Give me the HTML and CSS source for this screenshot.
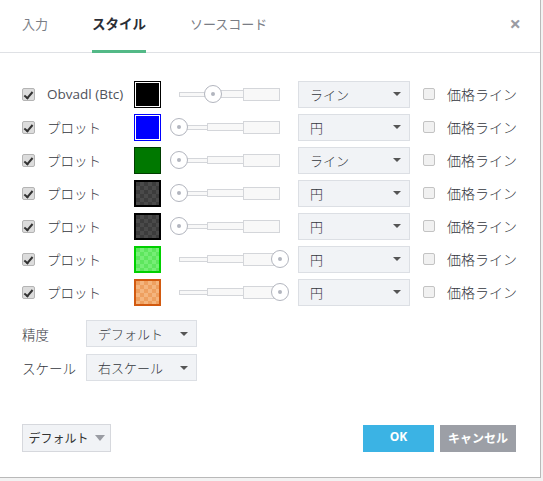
FILE: index.html
```html
<!DOCTYPE html>
<html lang="ja">
  <head>
    <meta charset="UTF-8" />
    <title>スタイル</title>
    <link rel="stylesheet" href="styles.css">
  </head>
  <body>
    <div class="dialog">
      <div class="dialog-header">
        <span class="tab">入力</span>
        <span class="tab tab-active">スタイル</span>
        <span class="tab">ソースコード</span>
        <span class="close">&times;</span>
      </div>

      <div class="dialog-body">
        <div class="plots">
          <div class="row">
            <span class="check checked"></span>
            <span class="label latin">Obvadl (Btc)</span>
            <span class="swatch black"><i></i></span>
            <div class="slider">
              <div class="track"><b class="s1"></b><b class="s2"></b><b class="s3"></b></div>
              <span class="handle" style="left: 43px"></span>
            </div>
            <div class="select"><span>ライン</span><i class="caret"></i></div>
            <span class="check"></span>
            <span class="price">価格ライン</span>
          </div>
          <div class="row">
            <span class="check checked"></span>
            <span class="label">プロット</span>
            <span class="swatch blue"><i></i></span>
            <div class="slider">
              <div class="track"><b class="s1"></b><b class="s2"></b><b class="s3"></b></div>
              <span class="handle" style="left: 9px"></span>
            </div>
            <div class="select"><span>円</span><i class="caret"></i></div>
            <span class="check"></span>
            <span class="price">価格ライン</span>
          </div>
          <div class="row">
            <span class="check checked"></span>
            <span class="label">プロット</span>
            <span class="swatch green"><i></i></span>
            <div class="slider">
              <div class="track"><b class="s1"></b><b class="s2"></b><b class="s3"></b></div>
              <span class="handle" style="left: 9px"></span>
            </div>
            <div class="select"><span>ライン</span><i class="caret"></i></div>
            <span class="check"></span>
            <span class="price">価格ライン</span>
          </div>
          <div class="row">
            <span class="check checked"></span>
            <span class="label">プロット</span>
            <span class="swatch checker dark"><i></i></span>
            <div class="slider">
              <div class="track"><b class="s1"></b><b class="s2"></b><b class="s3"></b></div>
              <span class="handle" style="left: 9px"></span>
            </div>
            <div class="select"><span>円</span><i class="caret"></i></div>
            <span class="check"></span>
            <span class="price">価格ライン</span>
          </div>
          <div class="row">
            <span class="check checked"></span>
            <span class="label">プロット</span>
            <span class="swatch checker dark"><i></i></span>
            <div class="slider">
              <div class="track"><b class="s1"></b><b class="s2"></b><b class="s3"></b></div>
              <span class="handle" style="left: 9px"></span>
            </div>
            <div class="select"><span>円</span><i class="caret"></i></div>
            <span class="check"></span>
            <span class="price">価格ライン</span>
          </div>
          <div class="row">
            <span class="check checked"></span>
            <span class="label">プロット</span>
            <span class="swatch checker lime"><i></i></span>
            <div class="slider">
              <div class="track"><b class="s1"></b><b class="s2"></b><b class="s3"></b></div>
              <span class="handle" style="left: 110px"></span>
            </div>
            <div class="select"><span>円</span><i class="caret"></i></div>
            <span class="check"></span>
            <span class="price">価格ライン</span>
          </div>
          <div class="row">
            <span class="check checked"></span>
            <span class="label">プロット</span>
            <span class="swatch checker orange"><i></i></span>
            <div class="slider">
              <div class="track"><b class="s1"></b><b class="s2"></b><b class="s3"></b></div>
              <span class="handle" style="left: 110px"></span>
            </div>
            <div class="select"><span>円</span><i class="caret"></i></div>
            <span class="check"></span>
            <span class="price">価格ライン</span>
          </div>
        </div>

        <div class="options">
          <div class="option">
            <span class="option-label">精度</span>
            <div class="select small"><span>デフォルト</span><i class="caret"></i></div>
          </div>
          <div class="option">
            <span class="option-label">スケール</span>
            <div class="select small"><span>右スケール</span><i class="caret"></i></div>
          </div>
        </div>
      </div>

      <div class="dialog-footer">
        <div class="btn-default">デフォルト <i class="caret big"></i></div>
        <div class="actions">
          <span class="btn ok">OK</span>
          <span class="btn cancel">キャンセル</span>
        </div>
      </div>
    </div>
  </body>
</html>
```

FILE: styles.css
```css
* {
  margin: 0;
  padding: 0;
  box-sizing: border-box;
}

body {
  font-family: "Open Sans", "Noto Sans CJK JP", sans-serif;
  font-size: 13px;
  font-weight: 300;
  color: #33363d;
  background-color: #f2f2f2;
  height: 481px;
  overflow: hidden;
}

.dialog {
  width: 541px;
  height: 478px;
  background-color: #fff;
  border-right: 1px solid #b9b9b9;
  border-bottom: 1px solid #b9b9b9;
  display: flex;
  flex-direction: column;
}

/* header */

.dialog-header {
  height: 53px;
  display: flex;
  align-items: stretch;
  padding-left: 22px;
  border-bottom: 1px solid #dfe1e5;
}

.tab {
  display: flex;
  align-items: center;
  padding-bottom: 4px;
  margin-right: 44px;
  font-size: 13px;
  font-weight: 400;
  color: #7a7d85;
  border-bottom: 3px solid transparent;
  margin-bottom: -1px;
}

.tab-active {
  color: #2b2e36;
  font-weight: bold;
  font-size: 13.5px;
  border-bottom-color: #53b987;
}

.close {
  margin-left: auto;
  margin-right: 19px;
  display: flex;
  align-items: center;
  padding-bottom: 5px;
  font-size: 20px;
  font-weight: bold;
  color: #9a9ca3;
}

/* body */

.dialog-body {
  flex: 1;
  padding: 28px 0 0 22px;
}

.plots {
  display: flex;
  flex-direction: column;
  gap: 7px;
}

.row {
  display: flex;
  align-items: center;
  height: 26px;
}

.check {
  width: 12px;
  height: 12px;
  border: 1px solid #c3c3c3;
  border-radius: 2px;
  background-color: #f1f1f1;
  flex-shrink: 0;
  position: relative;
}

.check.checked {
  width: 13px;
  height: 13px;
  background-color: #dcdcdc;
  border-color: #b4b4b4;
}

.check.checked::after {
  content: "";
  position: absolute;
  left: 3px;
  top: 1px;
  width: 3px;
  height: 7px;
  border-right: 2px solid #333;
  border-bottom: 2px solid #333;
  transform: rotate(40deg);
}

.label {
  width: 87px;
  margin-left: 12px;
  font-size: 13.5px;
}

.label.latin {
  font-weight: 400;
  color: #4f525a;
}

.swatch {
  width: 27px;
  height: 27px;
  border: 1px solid #000;
  padding: 1px;
  background-color: #fff;
  flex-shrink: 0;
}

.swatch > i {
  display: block;
  width: 100%;
  height: 100%;
}

.black > i { background-color: #000; }
.blue { border-color: #0000ff; }
.blue > i { background-color: #0000ff; }
.green { border-color: #003d00; padding: 0; }
.green > i { background-color: #007800; }

.checker { padding: 0; }
.checker > i {
  background-size: 8px 8px;
  background-position: 0 0, 4px 4px;
}

.dark { border: 2px solid #000; padding: 0; }
.dark > i {
  background-color: #3c3c3c;
  background-image:
    linear-gradient(45deg, #4a4a4a 25%, transparent 25%, transparent 75%, #4a4a4a 75%),
    linear-gradient(45deg, #4a4a4a 25%, transparent 25%, transparent 75%, #4a4a4a 75%);
}

.lime { border: 2px solid #00d000; }
.lime > i {
  background-color: #5ee65e;
  background-image:
    linear-gradient(45deg, #76ee76 25%, transparent 25%, transparent 75%, #76ee76 75%),
    linear-gradient(45deg, #76ee76 25%, transparent 25%, transparent 75%, #76ee76 75%);
}

.orange { border: 2px solid #d25a10; }
.orange > i {
  background-color: #eea060;
  background-image:
    linear-gradient(45deg, #f4b57e 25%, transparent 25%, transparent 75%, #f4b57e 75%),
    linear-gradient(45deg, #f4b57e 25%, transparent 25%, transparent 75%, #f4b57e 75%);
}

/* slider */

.slider {
  position: relative;
  width: 119px;
  height: 26px;
  margin-left: 9px;
  margin-right: 9px;
  display: flex;
  align-items: center;
}

.track {
  margin-left: 9px;
  width: 101px;
  display: flex;
  align-items: center;
}

.track > b {
  display: block;
  border: 1px solid #d4d6da;
  background-color: #f8f8f8;
}

.track .s1 { width: 29px; height: 5px; }
.track .s2 { width: 37px; height: 8px; margin-left: -1px; }
.track .s3 { width: 37px; height: 13px; margin-left: -1px; }

.handle {
  position: absolute;
  top: 4px;
  width: 18px;
  height: 18px;
  margin-left: -9px;
  border: 1px solid #b2b5be;
  border-radius: 50%;
  background-color: #fff;
}

.handle::after {
  content: "";
  position: absolute;
  left: 6px;
  top: 6px;
  width: 4px;
  height: 4px;
  border-radius: 50%;
  background-color: #b2b5be;
}

/* selects */

.select {
  width: 112px;
  height: 27px;
  margin-right: 13px;
  padding: 0 8px 0 11px;
  display: flex;
  align-items: center;
  justify-content: space-between;
  background-color: #f1f3f6;
  border: 1px solid #dcdfe4;
  font-size: 13px;
}

.caret {
  width: 0;
  height: 0;
  border-left: 4px solid transparent;
  border-right: 4px solid transparent;
  border-top: 4px solid #555;
}

.caret.big {
  border-left-width: 5px;
  border-right-width: 5px;
  border-top: 6px solid #9a9ca3;
  margin-left: 6px;
}

.price {
  margin-left: 12px;
  font-size: 14px;
}

.options {
  margin-top: 15px;
  display: flex;
  flex-direction: column;
  gap: 7px;
}

.option {
  display: flex;
  align-items: center;
}

.option-label {
  width: 64px;
  font-size: 13.5px;
}

.select.small {
  width: 111px;
}

/* footer */

.dialog-footer {
  display: flex;
  align-items: center;
  justify-content: space-between;
  padding: 0 24px 25px 22px;
}

.btn-default {
  width: 89px;
  height: 28px;
  display: flex;
  align-items: center;
  justify-content: center;
  background-color: #f1f3f6;
  border: 1px solid #d6d8dd;
  font-size: 12px;
  font-weight: 400;
  color: #333;
}

.actions {
  display: flex;
  gap: 6px;
}

.btn {
  height: 27px;
  display: flex;
  align-items: center;
  justify-content: center;
  color: #fff;
  font-weight: bold;
  font-size: 12px;
}

.ok {
  width: 71px;
  background-color: #3bb3e4;
  padding-bottom: 3px;
}

.cancel {
  width: 76px;
  background-color: #9c9fa6;
}
```
